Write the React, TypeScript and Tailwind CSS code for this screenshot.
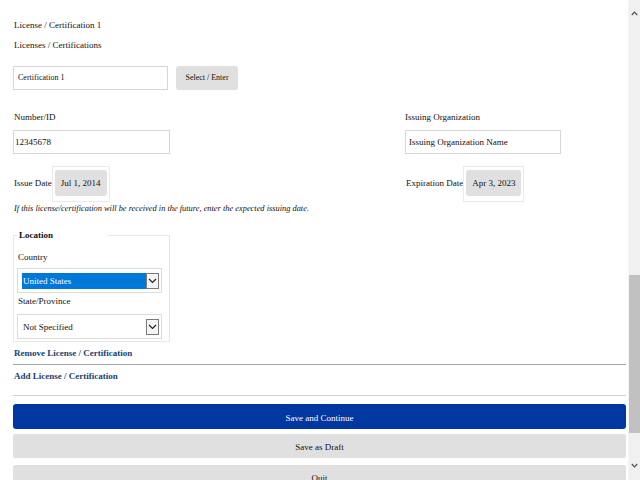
import React from "react";

function DateField({ label, value }: { label: string; value: string }) {
  return (
    <div className="flex items-start">
      <div className="mt-[11px] h-[12px] whitespace-nowrap pl-[1px]">{label}</div>
      <div className="border border-[#ebebeb] px-[2px] pt-[3px] pb-[5px]">
        <div className="flex h-[26px] items-center whitespace-nowrap rounded-[3px] bg-[#e0e0e0] px-[6px]">
          {value}
        </div>
      </div>
    </div>
  );
}

function Chevron() {
  return (
    <svg width="9" height="6" viewBox="0 0 9 6" fill="none">
      <polyline points="1,1 4.5,4.5 8,1" stroke="#222" strokeWidth="1.2" />
    </svg>
  );
}

function SelectBox({ text, highlighted }: { text: string; highlighted?: boolean }) {
  return (
    <div className="flex h-[25px] w-[145px] border border-[#dcdcdc] bg-white pl-[4px] pr-[2px] pt-[4px] pb-[3px]">
      {highlighted ? (
        <div className="flex flex-1 items-center bg-[#0078d7] pl-[1px] text-white">{text}</div>
      ) : (
        <div className="flex flex-1 items-center pl-[1px]">{text}</div>
      )}
      <div className="flex w-[13px] items-center justify-center border border-[#7a7a7a] bg-[#f4f4f4]">
        <Chevron />
      </div>
    </div>
  );
}

export default function App() {
  return (
    <div className="flex h-[480px] w-[640px] overflow-hidden bg-white font-['Liberation_Serif',serif] text-[9px] leading-[12px] text-[#111]">
      <div className="w-[629px] shrink-0 border-r border-[#f4f4f4] pl-[13px] pr-[2px]">
        <div className="mt-[19px] h-[12px] pl-[1px]">License / Certification 1</div>
        <div className="mt-[8px] h-[12px] pl-[1px]">Licenses / Certifications</div>
        <div className="mt-[15px] flex h-[24px]">
          <div className="flex h-[24px] w-[155px] items-center border border-[#d6d6d6] pl-[4px] text-[8px]">
            Certification 1
          </div>
          <div className="ml-[8px] flex h-[24px] w-[62px] items-center justify-center rounded-[3px] bg-[#e0e0e0] text-[8px]">
            Select / Enter
          </div>
        </div>
        <div className="mt-[21px] grid grid-cols-[392px_1fr]">
          <div>
            <div className="h-[12px] pl-[1px]">Number/ID</div>
            <div className="mt-[7px] flex h-[24px] w-[157px] items-center border border-[#d6d6d6] pl-[1px]">
              12345678
            </div>
          </div>
          <div>
            <div className="h-[12px]">Issuing Organization</div>
            <div className="mt-[7px] flex h-[24px] w-[156px] items-center border border-[#d6d6d6] pl-[3px]">
              Issuing Organization Name
            </div>
          </div>
        </div>
        <div className="mt-[12px] grid grid-cols-[392px_1fr]">
          <DateField label="Issue Date" value="Jul 1, 2014" />
          <DateField label="Expiration Date" value="Apr 3, 2023" />
        </div>
        <div className="mt-[1px] h-[12px] pl-[1px] text-[8.4px] italic">
          If this license/certification will be received in the future, enter the expected issuing date.
        </div>
        <fieldset className="mt-[14px] w-[157px] border border-[#e8e8e8] px-[3px] pb-[2px]">
          <legend className="h-[12px] w-[90px] pl-[2px] font-bold">Location</legend>
          <div className="mt-[10px] h-[12px] pl-[1px]">Country</div>
          <div className="mt-[5px]">
            <SelectBox text="United States" highlighted />
          </div>
          <div className="mt-[2px] h-[12px] pl-[1px]">State/Province</div>
          <div className="mt-[7px]">
            <SelectBox text="Not Specified" />
          </div>
        </fieldset>
        <div className="mt-[5px] h-[12px] pl-[1px] font-bold text-[#173f73]">Remove License / Certification</div>
        <div className="mt-[5px] h-[1px] bg-[#a3a3a3]" />
        <div className="mt-[5px] h-[12px] pl-[1px] font-bold text-[#173f73]">Add License / Certification</div>
        <div className="mt-[13px] h-[1px] bg-[#d2d2d2]" />
        <div className="mt-[8px] flex h-[25px] items-center justify-center rounded-[3px] bg-[#0037a1] pt-[2px] text-white">
          Save and Continue
        </div>
        <div className="mt-[5px] flex h-[24px] items-center justify-center rounded-[2px] bg-[#e0e0e0] pt-[2px]">
          Save as Draft
        </div>
        <div className="mt-[7px] flex h-[24px] items-center justify-center rounded-[2px] bg-[#e0e0e0] pt-[2px]">
          Quit
        </div>
      </div>
      <div className="flex w-[11px] shrink-0 flex-col bg-[#f0f0f0]">
        <div className="flex h-[26px] items-center justify-center">
          <svg width="7" height="5" viewBox="0 0 7 5" fill="none">
            <polyline points="0.8,4 3.5,1.2 6.2,4" stroke="#505050" strokeWidth="1.2" />
          </svg>
        </div>
        <div className="h-[249px]" />
        <div className="h-[158px] bg-[#c1c1c1]" />
        <div className="flex-1" />
        <div className="flex h-[30px] items-center justify-center">
          <svg width="7" height="5" viewBox="0 0 7 5" fill="none">
            <polyline points="0.8,1 3.5,3.8 6.2,1" stroke="#505050" strokeWidth="1.2" />
          </svg>
        </div>
      </div>
    </div>
  );
}
